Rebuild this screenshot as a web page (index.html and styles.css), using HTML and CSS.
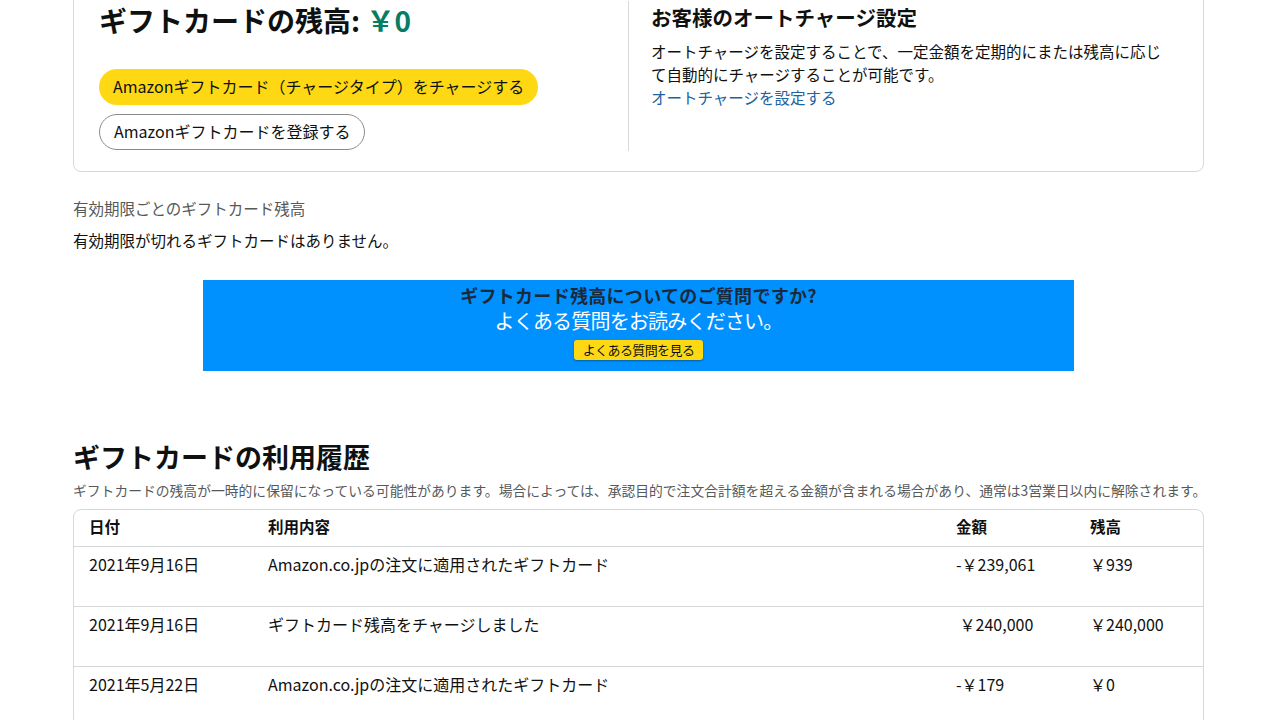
FILE: index.html
```
<!DOCTYPE html>
<html lang="ja">
<head>
    <meta charset="utf-8">
    <title>ギフトカード</title>
    <link rel="stylesheet" href="styles.css">
</head>
<body>
    <div class="page">
        <!-- Balance and auto charge -->
        <div class="balance-box">
            <div class="balance-left">
                <h1 class="balance-heading">ギフトカードの残高: <span class="amount">￥0</span></h1>
                <div class="btn-stack">
                    <a href="#" class="pill pill-yellow">Amazonギフトカード（チャージタイプ）をチャージする</a>
                    <a href="#" class="pill pill-outline">Amazonギフトカードを登録する</a>
                </div>
            </div>
            <div class="balance-right">
                <h2 class="auto-heading">お客様のオートチャージ設定</h2>
                <p class="auto-text">オートチャージを設定することで、一定金額を定期的にまたは残高に応じて自動的にチャージすることが可能です。</p>
                <a href="#" class="link">オートチャージを設定する</a>
            </div>
        </div>

        <div class="expiry">
            <p class="expiry-title">有効期限ごとのギフトカード残高</p>
            <p class="expiry-text">有効期限が切れるギフトカードはありません。</p>
        </div>

        <!-- FAQ banner -->
        <div class="faq-banner">
            <p class="faq-q">ギフトカード残高についてのご質問ですか?</p>
            <p class="faq-a">よくある質問をお読みください。</p>
            <a href="#" class="faq-btn">よくある質問を見る</a>
        </div>

        <!-- History -->
        <h2 class="history-heading">ギフトカードの利用履歴</h2>
        <p class="history-note">ギフトカードの残高が一時的に保留になっている可能性があります。場合によっては、承認目的で注文合計額を超える金額が含まれる場合があり、通常は3営業日以内に解除されます。</p>

        <div class="history-table">
            <div class="row head">
                <div class="c-date">日付</div>
                <div class="c-desc">利用内容</div>
                <div class="c-amt">金額</div>
                <div class="c-bal">残高</div>
            </div>
            <div class="row">
                <div class="c-date">2021年9月16日</div>
                <div class="c-desc">Amazon.co.jpの注文に適用されたギフトカード</div>
                <div class="c-amt">-￥239,061</div>
                <div class="c-bal">￥939</div>
            </div>
            <div class="row">
                <div class="c-date">2021年9月16日</div>
                <div class="c-desc">ギフトカード残高をチャージしました</div>
                <div class="c-amt">&nbsp;￥240,000</div>
                <div class="c-bal">￥240,000</div>
            </div>
            <div class="row">
                <div class="c-date">2021年5月22日</div>
                <div class="c-desc">Amazon.co.jpの注文に適用されたギフトカード</div>
                <div class="c-amt">-￥179</div>
                <div class="c-bal">￥0</div>
            </div>
        </div>
    </div>
</body>
</html>
```
FILE: styles.css
```
body {
    margin: 0;
    font-family: "Noto Sans CJK JP", "Noto Sans", sans-serif;
    color: #0f1111;
    background-color: #fff;
    font-size: 15.5px;
}

p {
    margin: 0;
}

.page {
    width: 1131px;
    margin: 0 0 0 73px;
}

/* Top card */
.balance-box {
    display: flex;
    margin-top: -12px;
    padding: 12px 24px 20px 25px;
    border: 1px solid #d5d9d9;
    border-radius: 8px;
    height: 150px;
}

.balance-left {
    width: 529px;
    flex-shrink: 0;
    border-right: 1px solid #d5d9d9;
    padding-top: 3px;
}

.balance-heading {
    font-size: 28px;
    font-weight: bold;
    margin: 0;
    line-height: 32px;
}

.amount {
    color: #067d62;
}

.btn-stack {
    display: flex;
    flex-direction: column;
    align-items: flex-start;
    gap: 9px;
    margin-top: 33px;
}

.pill {
    display: inline-block;
    height: 36px;
    line-height: 35px;
    padding: 0 14px;
    border-radius: 18px;
    color: #0f1111;
    text-decoration: none;
    font-size: 16px;
    box-sizing: border-box;
}

.pill-yellow {
    background-color: #ffd814;
}

.pill-outline {
    border: 1px solid #888c8c;
    line-height: 33px;
}

.balance-right {
    width: 515px;
    padding-left: 22px;
    padding-top: 2px;
}

.auto-heading {
    font-size: 20.5px;
    font-weight: bold;
    margin: 0 0 9px;
    line-height: 28px;
}

.auto-text {
    line-height: 23px;
}

.link {
    color: #2162a1;
    text-decoration: none;
    line-height: 23px;
}

/* Expiry */
.expiry {
    margin-top: 25px;
}

.expiry-title {
    color: #565959;
    line-height: 22px;
}

.expiry-text {
    margin-top: 10px;
    line-height: 22px;
}

/* FAQ banner */
.faq-banner {
    width: 871px;
    height: 91px;
    margin: 29px 0 0 130px;
    background-color: #0091ff;
    display: flex;
    flex-direction: column;
    align-items: center;
    box-sizing: border-box;
    padding-top: 3px;
}

.faq-q {
    font-size: 18px;
    font-weight: bold;
    color: #1a2a3a;
    line-height: 24px;
    letter-spacing: 0.3px;
}

.faq-a {
    font-size: 20px;
    color: #fff;
    line-height: 28px;
    letter-spacing: -0.8px;
}

.faq-btn {
    margin-top: 5px;
    background-color: #ffd814;
    color: #111;
    font-size: 13px;
    line-height: 20px;
    padding: 0 9px;
    border-radius: 3px;
    text-decoration: none;
    box-shadow: 0 1px 2px rgba(0, 0, 0, 0.35);
    letter-spacing: -0.6px;
}

/* History */
.history-heading {
    font-size: 27px;
    font-weight: bold;
    margin: 68px 0 0;
    line-height: 36px;
}

.history-note {
    font-size: 13.8px;
    color: #565959;
    margin-top: 6px;
    line-height: 18px;
    white-space: nowrap;
}

.history-table {
    margin-top: 10px;
    border: 1px solid #d5d9d9;
    border-radius: 8px;
}

.row {
    display: flex;
    height: 60px;
    border-top: 1px solid #d5d9d9;
    padding: 6px 15px 0;
    box-sizing: border-box;
    line-height: 22px;
    font-size: 16px;
}

.row.head {
    height: 36px;
    border-top: none;
    font-weight: bold;
    padding-top: 5px;
    font-size: 15.5px;
}

.c-date {
    width: 179px;
}

.c-desc {
    width: 688px;
}

.c-amt {
    width: 134px;
}

.c-bal {
    flex: 1;
}
```
